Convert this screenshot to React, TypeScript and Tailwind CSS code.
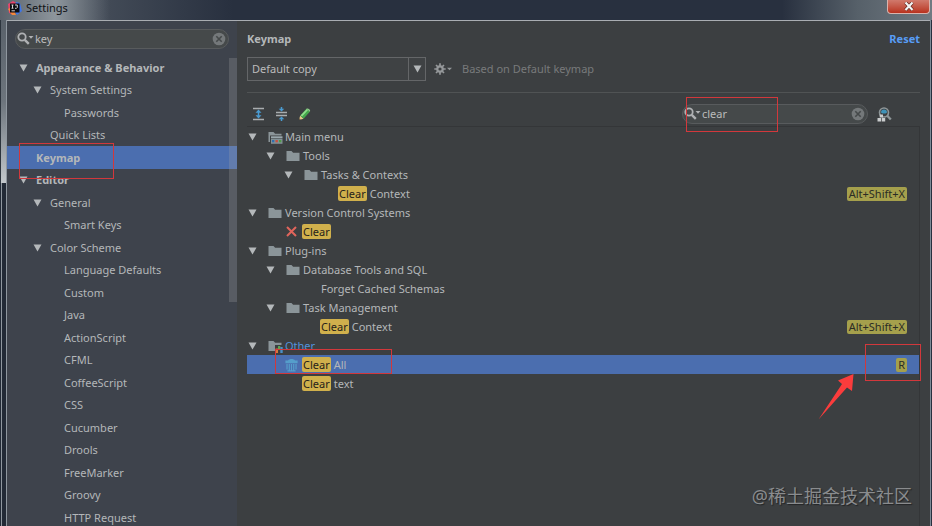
import { useState } from "react"
import type { ReactNode } from "react"

type NavItem = { label: string; level: number; open?: boolean; bold?: boolean }

const NAV: NavItem[] = [
  { label: "Appearance & Behavior", level: 0, open: true, bold: true },
  { label: "System Settings", level: 1, open: true },
  { label: "Passwords", level: 2 },
  { label: "Quick Lists", level: 1 },
  { label: "Keymap", level: 0, bold: true },
  { label: "Editor", level: 0, open: true, bold: true },
  { label: "General", level: 1, open: true },
  { label: "Smart Keys", level: 2 },
  { label: "Color Scheme", level: 1, open: true },
  { label: "Language Defaults", level: 2 },
  { label: "Custom", level: 2 },
  { label: "Java", level: 2 },
  { label: "ActionScript", level: 2 },
  { label: "CFML", level: 2 },
  { label: "CoffeeScript", level: 2 },
  { label: "CSS", level: 2 },
  { label: "Cucumber", level: 2 },
  { label: "Drools", level: 2 },
  { label: "FreeMarker", level: 2 },
  { label: "Groovy", level: 2 },
  { label: "HTTP Request", level: 2 },
]

const NAV_INDENT = ["pl-3", "pl-[26px]", "pl-10"]

type Icon = "folder" | "menu" | "other" | "cross" | "trash"
type Action = { label: string; match?: string; indent: string; open?: boolean; icon?: Icon; keys?: string; link?: boolean }

const ACTIONS: Action[] = [
  { label: "Main menu", indent: "pl-0", open: true, icon: "menu" },
  { label: "Tools", indent: "pl-[18px]", open: true, icon: "folder" },
  { label: "Tasks & Contexts", indent: "pl-9", open: true, icon: "folder" },
  { match: "Clear", label: "Context", indent: "pl-[91px]", keys: "Alt+Shift+X" },
  { label: "Version Control Systems", indent: "pl-0", open: true, icon: "folder" },
  { match: "Clear", label: "", indent: "pl-[38px]", icon: "cross" },
  { label: "Plug-ins", indent: "pl-0", open: true, icon: "folder" },
  { label: "Database Tools and SQL", indent: "pl-[18px]", open: true, icon: "folder" },
  { label: "Forget Cached Schemas", indent: "pl-[74px]" },
  { label: "Task Management", indent: "pl-[18px]", open: true, icon: "folder" },
  { match: "Clear", label: "Context", indent: "pl-[73px]", keys: "Alt+Shift+X" },
  { label: "Other", indent: "pl-0", open: true, icon: "other", link: true },
  { match: "Clear", label: "All", indent: "pl-[38px]", icon: "trash", keys: "R" },
  { match: "Clear", label: "text", indent: "pl-[55px]" },
]

// ============================================================
// Icons
// ============================================================

function Triangle() {
  return (
    <svg width="9" height="8" viewBox="0 0 9 8" className="shrink-0" aria-hidden="true">
      <path d="M0.5 0.5h8L4.5 7.5z" fill="#b4b8ba" />
    </svg>
  )
}

function SearchIcon() {
  return (
    <svg width="17" height="14" viewBox="0 0 17 14" className="shrink-0" aria-hidden="true">
      <circle cx="5" cy="5" r="3.7" fill="none" stroke="#afb1b3" strokeWidth="1.8" />
      <path d="M7.8 7.8l4 4" stroke="#afb1b3" strokeWidth="2.4" />
      <path d="M11.5 4h5L14 6.8z" fill="#afb1b3" />
    </svg>
  )
}

function ClearIcon() {
  return (
    <svg width="14" height="14" viewBox="0 0 14 14" aria-hidden="true">
      <circle cx="7" cy="7" r="6.3" fill="#74787a" />
      <path d="M4.3 4.3l5.4 5.4M9.7 4.3L4.3 9.7" stroke="#45494a" strokeWidth="1.6" />
    </svg>
  )
}

function RowIcon({ icon }: { icon: Icon }) {
  if (icon === "cross") {
    return (
      <svg width="13" height="13" viewBox="0 0 13 13" className="shrink-0" aria-hidden="true">
        <path d="M2 2l9 9M11 2l-9 9" stroke="#e0655c" strokeWidth="2" />
      </svg>
    )
  }
  if (icon === "trash") {
    return (
      <svg width="13" height="14" viewBox="0 0 13 14" className="shrink-0" aria-hidden="true">
        <path d="M3 2.6C4 0.6 9 0.6 10 2.6h2.6v2.6H0.4V2.6z" fill="#559ecb" />
        <path d="M2 6v5.5M4.3 6v7M6.5 6v7M8.7 6v7M11 6v5.5M2.4 12.8h8.2" stroke="#559ecb" strokeWidth="1.2" />
      </svg>
    )
  }
  return (
    <svg width="15" height="14" viewBox="0 0 15 14" className="shrink-0" aria-hidden="true">
      <path d="M0.5 2h5l1.6 1.7h6.4V12h-13z" fill="#8b9599" />
      {icon === "menu" && (
        <g>
          <path d="M2 5.5h13V14H2z" fill="#3c3f41" />
          <path d="M3 6.3h11.5v2H3z" fill="#9aa7ac" />
          <path d="M3 8.8h11.5v5H3z" fill="#829095" />
          <path d="M4 10h2.3v2.3H4z" fill="#2f6fb0" />
          <path d="M7.5 10h2.3v2.3H7.500z" fill="#c8503f" />
          <path d="M11 10h2.3v2.3H11z" fill="#4e9c46" />
        </g>
      )}
      {icon === "other" && (
        <g>
          <path d="M7 6h8v8H7z" fill="#3c3f41" />
          <path d="M7.5 9.500H10V14H7.500z" fill="#d9793b" />
          <path d="M10 7h2.300v4H10z" fill="#5fa552" />
          <path d="M12.300 8h2.400v6h-2.400z" fill="#4a90c8" />
        </g>
      )}
    </svg>
  )
}

function LogoIcon() {
  return (
    <svg width="14" height="14" viewBox="0 0 14 14" className="shrink-0" aria-hidden="true">
      <path d="M0 3L5 0l5 3-4 11-5-2z" fill="#e8446c" />
      <path d="M0 8l4 6h4L4 6z" fill="#f5873b" />
      <path d="M8 1l4 1 2 8-5 4-3-5z" fill="#3f76e8" />
      <path d="M2 2.5h9.5v9H2z" fill="#0b0b10" />
      <path d="M3.5 4h2M4.5 4v3.2M3.5 7.2h2M7 4h2.3v2.5l-0.8 0.8H7M3.5 9.8h3.4" stroke="#e8e8ea" strokeWidth="0.9" fill="none" />
    </svg>
  )
}

function ExpandIcon() {
  return (
    <svg width="13" height="14" viewBox="0 0 13 14" aria-hidden="true">
      <path d="M1 1.5h11M1 12.5h11" stroke="#a9adaf" strokeWidth="1.5" />
      <path d="M6.5 2.6l3 3.2h-6zM6.5 11.4l3-3.2h-6z" fill="#4a9bd1" />
      <path d="M6.5 5v4" stroke="#4a9bd1" strokeWidth="1.5" />
    </svg>
  )
}

function CollapseIcon() {
  return (
    <svg width="13" height="14" viewBox="0 0 13 14" aria-hidden="true">
      <path d="M1 5.5h11M1 8.5h11" stroke="#a9adaf" strokeWidth="1.5" />
      <path d="M6.5 4.5l2.8-2.7H3.7zM6.5 9.5l2.8 2.7H3.7z" fill="#4a9bd1" />
      <path d="M6.5 0v3M6.5 11v3" stroke="#4a9bd1" strokeWidth="1.5" />
    </svg>
  )
}

function PencilIcon() {
  return (
    <svg width="13" height="14" viewBox="0 0 13 14" aria-hidden="true">
      <path d="M1 13l1.2-4.5 3.3 3.2z" fill="#e3c88a" />
      <path d="M2.2 8.5l6.2-6.7 3.4 3-6.3 6.900z" fill="#45a84c" />
      <path d="M3.4 8.8l6-6.3" stroke="#93dc8d" strokeWidth="1.8" />
      <path d="M8.4 1.8c1.4-1.4 4.8 1 3.4 3z" fill="#8fd08b" />
      <path d="M1 13l0.5-1.8 1.2 1.2z" fill="#4a3a2a" />
    </svg>
  )
}

function GearIcon() {
  return (
    <svg width="19" height="12" viewBox="0 0 19 12" aria-hidden="true">
      <path d="M6 0.3v11.4M0.3 6h11.4M2 2l8 8M10 2l-8 8" stroke="#95989a" strokeWidth="1.7" />
      <circle cx="6" cy="6" r="3.8" fill="#95989a" />
      <circle cx="6" cy="6" r="1.6" fill="#3c3f41" />
      <path d="M13 4.7h5L15.5 7.3z" fill="#95989a" />
    </svg>
  )
}

function ShortcutSearchIcon() {
  return (
    <svg width="15" height="15" viewBox="0 0 15 15" aria-hidden="true">
      <circle cx="7" cy="5.5" r="4.5" fill="#3c3f41" stroke="#8e9698" strokeWidth="1.6" />
      <path d="M4 5.5a3 3 0 0 1 6 0l-1.5 1h-3z" fill="#3f93b8" />
      <path d="M10 8.5l3.8 4" stroke="#8e9698" strokeWidth="2.4" />
      <path d="M2.7 7.5H6v3H2.7zM0.5 11H4v3.5H0.5zM4.7 11h3.5v3.5H4.7z" fill="#c9cccd" />
    </svg>
  )
}

// ============================================================
// Controls
// ============================================================

function SearchBox({ value, onChange, label }: {
  value: string; onChange: (v: string) => void; label: string
}) {
  return (
    <div className="flex h-5 w-full items-center rounded-full border border-[#585b5d] bg-[#45494a] pr-[2px] pl-px">
      <SearchIcon />
      <input
        type="text"
        aria-label={label}
        value={value}
        onChange={e => onChange(e.target.value)}
        className="min-w-0 flex-1 bg-transparent pl-px leading-4 text-[#bbbbbb] outline-none"
      />
      <button aria-label="Clear search" onClick={() => onChange("")}>
        <ClearIcon />
      </button>
    </div>
  )
}

function ToolButton({ label, children }: { label: string; children: ReactNode }) {
  return (
    <button aria-label={label} title={label} className="flex items-center justify-center">
      {children}
    </button>
  )
}

function Sidebar() {
  const [query, setQuery] = useState("key")
  const [active, setActive] = useState("Keymap")

  return (
    <aside className="flex w-[230px] shrink-0 flex-col bg-[#3e434c]">
      <div className="px-2 pt-2 pb-[7px]">
        <SearchBox value={query} onChange={setQuery} label="Search settings" />
      </div>
      <nav className="relative min-h-0 flex-1 overflow-hidden">
        <ul>
          {NAV.map(item => (
            <li key={item.label} className="odd:h-[23px] even:h-[22px]">
              <button
                onClick={() => setActive(item.label)}
                className={`flex h-full w-full items-center ${NAV_INDENT[item.level]} ${item.label === active ? "bg-[#4b6eaf]" : ""}`}
              >
                <span className="flex w-[17px] shrink-0">{item.open && <Triangle />}</span>
                <span className={item.bold ? "font-bold" : ""}>{item.label}</span>
              </button>
            </li>
          ))}
        </ul>
        {/* scroll thumb */}
        <div className="absolute top-[2px] right-0 h-[244px] w-2 bg-[#a6a6a6]/25" />
        {/* callout */}
        <div className="pointer-events-none absolute top-[87px] left-3 h-9 w-[95px] border border-[#d2383c]" />
      </nav>
    </aside>
  )
}

function ActionRow({ action, selected, onSelect }: {
  action: Action; selected: boolean; onSelect: () => void
}) {
  return (
    <li className="relative">
      <button
        onClick={onSelect}
        className={`flex h-[19px] w-full items-center pr-3 ${action.indent} ${selected ? "bg-[#4b6eaf]" : ""}`}
      >
        {action.open && <span className="flex w-[21px] shrink-0 pl-px"><Triangle /></span>}
        {action.icon && <span className="flex w-[17px] shrink-0"><RowIcon icon={action.icon} /></span>}
        {action.match && (
          <mark className="mr-[3px] rounded-[2px] bg-[#d0b04c] px-px leading-[15px] text-[#26221a]">{action.match}</mark>
        )}
        <span className={action.link ? "text-[#5394dc]" : ""}>{action.label}</span>
        {action.keys && (
          <kbd className="ml-auto rounded-[2px] bg-[#a5a04c] px-[2px] font-[inherit] leading-[14px] text-[#2b2c24]">{action.keys}</kbd>
        )}
      </button>
      {selected && (
        <>
          <span className="pointer-events-none absolute -top-[6px] left-7 h-[25px] w-[117px] border border-[#d2383c]" />
          <span className="pointer-events-none absolute -top-[11px] -right-[2px] h-[37px] w-14 border border-[#d2383c]" />
          <svg width="38" height="48" viewBox="0 0 38 48" className="pointer-events-none absolute top-[18px] right-16" aria-hidden="true">
            <path d="M36.5 1L35 18l-5-3.5L1.5 46.5 25 11l-4-3.5z" fill="#fb3c3c" />
          </svg>
        </>
      )}
    </li>
  )
}

function KeymapPanel() {
  const [query, setQuery] = useState("clear")
  const [selected, setSelected] = useState(12)

  return (
    <main className="flex min-w-0 flex-1 flex-col bg-[#3c3f41] px-[10px]">
      <header className="flex items-center justify-between pt-[10px]">
        <h1 className="font-bold">Keymap</h1>
        <button className="font-bold text-[#589df6]">Reset</button>
      </header>

      <div className="flex items-center pt-[10px] pb-[11px]">
        <div className="relative flex h-6 w-[179px]">
          <select aria-label="Keymap scheme" className="w-full appearance-none border border-[#646668] bg-[#3f4244] pl-1 text-[#bbbbbb] outline-none">
            <option>Default copy</option>
          </select>
          <span className="pointer-events-none absolute inset-y-0 right-0 flex w-[18px] items-center justify-center border-l border-[#646668]">
            <Triangle />
          </span>
        </div>
        <div className="flex pl-2">
          <ToolButton label="Scheme actions"><GearIcon /></ToolButton>
        </div>
        <span className="pl-[9px] text-[#787a7b]">Based on Default keymap</span>
      </div>

      <div className="flex h-[34px] items-end border-t border-[#505354] pb-[2px]">
        <div className="flex h-5 items-center gap-[10px] pl-[5px]">
          <ToolButton label="Expand all"><ExpandIcon /></ToolButton>
          <ToolButton label="Collapse all"><CollapseIcon /></ToolButton>
          <ToolButton label="Edit shortcut"><PencilIcon /></ToolButton>
        </div>
        <div className="relative ml-auto w-[186px]">
          <SearchBox value={query} onChange={setQuery} label="Search actions" />
          <div className="pointer-events-none absolute -top-[7px] left-1 h-[35px] w-[92px] border border-[#d2383c]" />
        </div>
        <div className="flex h-5 items-center pr-7 pl-[9px]">
          <ToolButton label="Find by shortcut"><ShortcutSearchIcon /></ToolButton>
        </div>
      </div>

      <ul className="min-h-0 flex-1 border-t border-r border-[#343638]">
        {ACTIONS.map((a, i) => (
          <ActionRow key={i} action={a} selected={i === selected} onSelect={() => setSelected(i)} />
        ))}
      </ul>
    </main>
  )
}

function TitleBar() {
  return (
    <div className="flex h-5 shrink-0 items-start bg-linear-to-r from-[#5a626b] via-[#28303f] via-25% to-[#28303f]">
      <div className="flex h-5 w-[110px] shrink-0 items-center gap-1 bg-linear-to-r from-[#5a626b] via-[#8d959c] to-transparent pb-1 pl-2">
        <LogoIcon />
        <span className="text-[#101216]">Settings</span>
      </div>
      <div className="h-5 flex-1" />
      <div className="flex h-5 w-[150px] shrink-0 items-start justify-end bg-linear-to-r from-transparent via-[#566069] to-[#717a82] pr-[2px]">
        <button
          aria-label="Close"
          className="flex h-[14px] w-[43px] items-center justify-center rounded-b-[4px] border border-t-0 border-[#d9b4ae] bg-linear-to-b from-[#d0796c] to-[#b8301c]"
        >
          <svg width="10" height="9" viewBox="0 0 10 9" aria-hidden="true">
            <path d="M1.5 0.5l7 7.5M8.5 0.5l-7 7.5" stroke="#5b2620" strokeWidth="3.4" />
            <path d="M1.5 0.5l7 7.5M8.5 0.5l-7 7.5" stroke="#f4f4f4" strokeWidth="2.2" />
          </svg>
        </button>
      </div>
    </div>
  )
}

export default function App() {
  return (
    <div className="relative flex h-screen w-full flex-col overflow-hidden bg-[#28303f] font-['Noto_Sans','Noto_Sans_CJK_SC',sans-serif] text-[11px] leading-4 text-[#b4b7b9]">
      <TitleBar />
      <div className="flex min-h-0 flex-1">
        {/* glass frame, left edge */}
        <div className="flex w-[7px] shrink-0 flex-col border-r border-[#8f979f] bg-[#222a36]">
          <div className="h-[163px] w-full border-l border-[#2c343d] bg-linear-to-b from-[#59616a] via-[#6d757d] to-[#c3c8cc]" />
          <div className="ml-px w-px flex-1 bg-[#8f979f]" />
        </div>
        <div className="flex min-w-0 flex-1 border-t border-[#a9adb2]">
          <Sidebar />
          <KeymapPanel />
        </div>
        <div className="w-[2px] shrink-0 border-l border-[#7f8a96] bg-[#28303f]" />
      </div>
      <div className="pointer-events-none absolute right-5 bottom-4 text-lg text-[#8a8c8e] [text-shadow:1px_1px_1px_#222426]">
        @稀土掘金技术社区
      </div>
    </div>
  )
}
